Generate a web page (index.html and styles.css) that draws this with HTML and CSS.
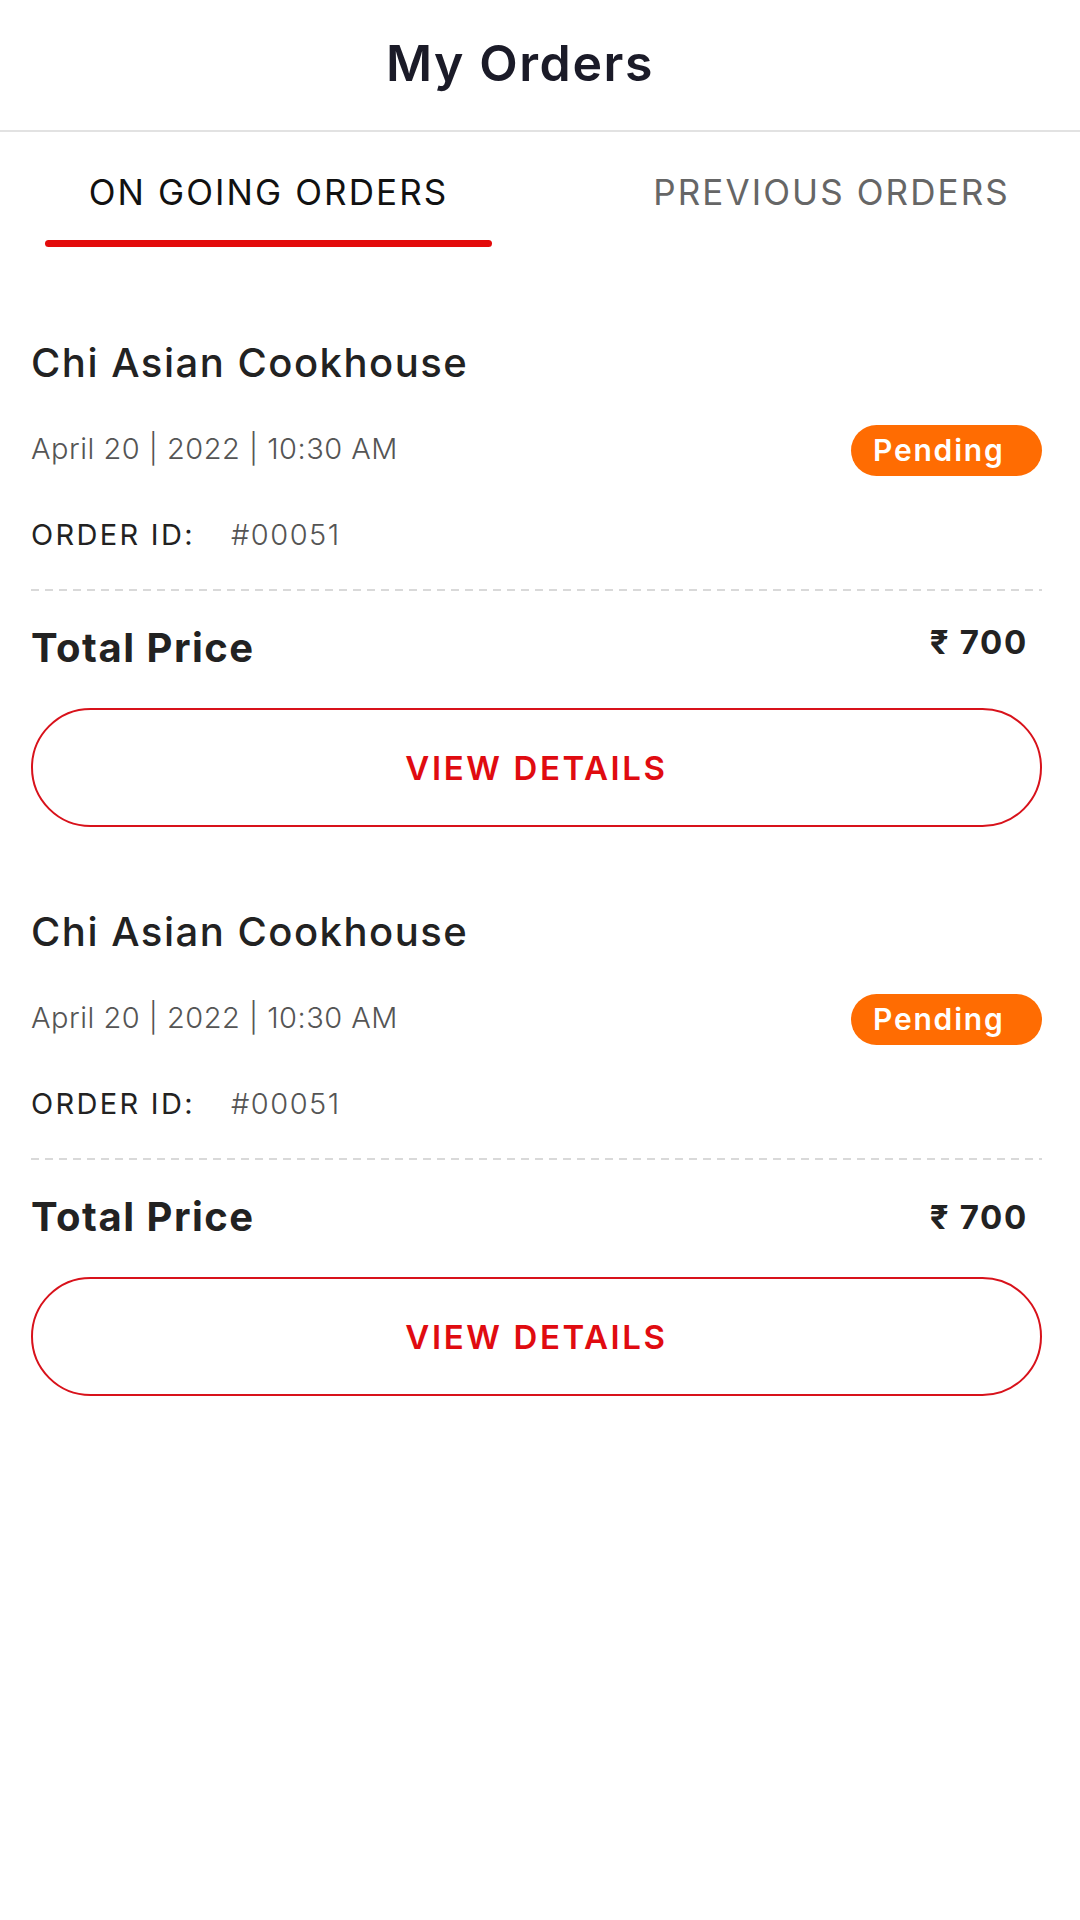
FILE: index.html
```html
<!DOCTYPE html>
<html lang="en">
<head>
<meta charset="utf-8">
<title>My Orders</title>
<link rel="stylesheet" href="styles.css">
</head>
<body>
<header class="topbar">
  <h1 class="title">My Orders</h1>
</header>
<nav class="tabs">
  <div class="tab tab-active">ON GOING ORDERS</div>
  <div class="tab">PREVIOUS ORDERS</div>
</nav>
<main class="orders">
  <section class="order">
    <h2 class="restaurant">Chi Asian Cookhouse</h2>
    <div class="meta">
      <span class="date">April 20 | 2022 | 10:30 AM</span>
      <span class="badge">Pending</span>
    </div>
    <div class="order-id"><span class="oid-label">ORDER ID:</span><span class="oid-value">#00051</span></div>
    <div class="dash"></div>
    <div class="total total-top"><span class="total-label">Total Price</span><span class="price">₹ 700</span></div>
    <button class="details">VIEW DETAILS</button>
  </section>
  <section class="order">
    <h2 class="restaurant">Chi Asian Cookhouse</h2>
    <div class="meta">
      <span class="date">April 20 | 2022 | 10:30 AM</span>
      <span class="badge">Pending</span>
    </div>
    <div class="order-id"><span class="oid-label">ORDER ID:</span><span class="oid-value">#00051</span></div>
    <div class="dash"></div>
    <div class="total"><span class="total-label">Total Price</span><span class="price">₹ 700</span></div>
    <button class="details">VIEW DETAILS</button>
  </section>
</main>
</body>
</html>
```
FILE: styles.css
```css
html, body {
  margin: 0;
  padding: 0;
  background: #ffffff;
}
body {
  font-family: "Inter", "DejaVu Sans", sans-serif;
  color: #222222;
  width: 1080px;
}
.topbar {
  height: 130px;
  border-bottom: 2px solid #e2e2e2;
  display: flex;
  align-items: center;
  justify-content: center;
}
.title {
  margin: 0 40px 0 0;
  font-size: 50px;
  font-weight: 600;
  color: #1b1b28;
  letter-spacing: 1.6px;
  line-height: 60px;
  padding-bottom: 4px;
}
.tabs {
  display: flex;
  gap: 116px;
  padding-left: 45px;
  height: 112px;
}
.tab {
  width: 447px;
  text-align: center;
  font-size: 35px;
  font-weight: 400;
  letter-spacing: 2.1px;
  color: #666666;
  padding-top: 38px;
  line-height: 44px;
  box-sizing: border-box;
  position: relative;
  white-space: nowrap;
}
.tab-active {
  color: #111111;
}
.tab-active::after {
  content: "";
  position: absolute;
  left: 0;
  right: 0;
  top: 108px;
  height: 7px;
  border-radius: 4px;
  background: #e30b0b;
}
.orders {
  padding: 94px 38px 0 31px;
  display: flex;
  flex-direction: column;
  gap: 80px;
}
.order {
  display: flex;
  flex-direction: column;
}
.restaurant {
  margin: 0;
  font-size: 40px;
  font-weight: 500;
  line-height: 50px;
  color: #222222;
  letter-spacing: 1.5px;
  white-space: nowrap;
}
.meta {
  margin-top: 37px;
  display: flex;
  align-items: center;
  justify-content: space-between;
  height: 51px;
}
.date {
  font-size: 29px;
  font-weight: 300;
  color: #555555;
  letter-spacing: 0.5px;
  padding-bottom: 4px;
}
.badge {
  background: #ff6c02;
  color: #ffffff;
  font-size: 30px;
  font-weight: 600;
  letter-spacing: 1.8px;
  height: 51px;
  line-height: 51px;
  border-radius: 26px;
  box-sizing: border-box;
  width: 191px;
  padding-left: 22px;
}
.order-id {
  margin-top: 39px;
  line-height: 40px;
  display: flex;
  font-size: 29px;
}
.oid-label {
  width: 200px;
  color: #222222;
  font-weight: 400;
  letter-spacing: 2.3px;
}
.oid-value {
  color: #555555;
  font-weight: 300;
  letter-spacing: 1.5px;
}
.dash {
  margin-top: 34px;
  height: 2px;
  background: repeating-linear-gradient(90deg, #d9d9d9 0 8px, transparent 8px 14px);
}
.total {
  margin-top: 32px;
  display: flex;
  justify-content: space-between;
  align-items: center;
  height: 50px;
  line-height: 50px;
  padding-right: 14px;
}
.total-top {
  align-items: flex-start;
}
.total-top .price {
  line-height: 38px;
}
.total-label {
  font-size: 40px;
  font-weight: 700;
  color: #222222;
  letter-spacing: 1.5px;
}
.price {
  font-size: 33px;
  font-weight: 700;
  color: #222222;
  letter-spacing: 1.7px;
}
.details {
  margin-top: 35px;
  height: 119px;
  border: 2px solid #d8121b;
  border-radius: 60px;
  background: #ffffff;
  color: #e00b10;
  font-family: inherit;
  font-size: 33px;
  font-weight: 600;
  letter-spacing: 2.6px;
  padding: 0;
  width: 100%;
}
```
